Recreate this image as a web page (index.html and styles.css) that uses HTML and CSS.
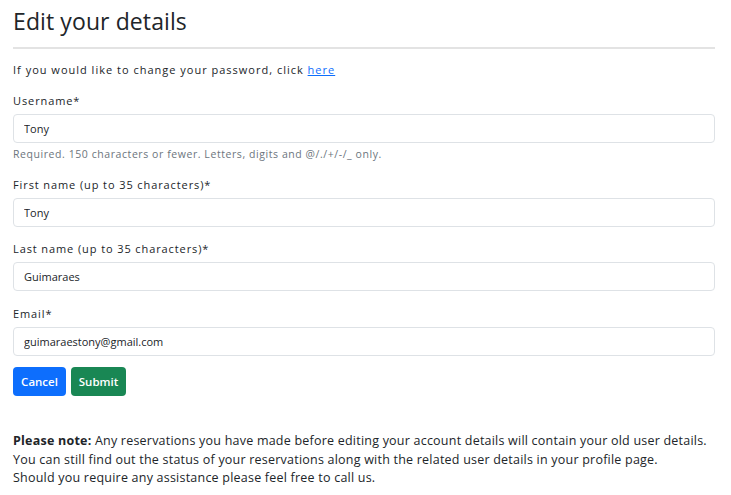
FILE: index.html
```html
<!DOCTYPE html>
<html lang="en">
<head>
<meta charset="utf-8">
<title>Edit your details</title>
<link rel="stylesheet" href="styles.css">
</head>
<body>
<main class="page">
  <h1 class="title">Edit your details</h1>
  <hr class="rule">
  <p class="intro">If you would like to change your password, click <a href="#" class="link">here</a></p>
  <form class="form">
    <div class="field">
      <label class="label" for="username">Username*</label>
      <input class="input" id="username" type="text" value="Tony">
      <div class="help">Required. 150 characters or fewer. Letters, digits and @/./+/-/_ only.</div>
    </div>
    <div class="field">
      <label class="label" for="first">First name (up to 35 characters)*</label>
      <input class="input" id="first" type="text" value="Tony">
    </div>
    <div class="field">
      <label class="label" for="last">Last name (up to 35 characters)*</label>
      <input class="input" id="last" type="text" value="Guimaraes">
    </div>
    <div class="field">
      <label class="label" for="email">Email*</label>
      <input class="input" id="email" type="email" value="guimaraestony@gmail.com">
    </div>
    <div class="actions">
      <a href="#" class="btn btn-blue">Cancel</a>
      <button type="button" class="btn btn-green">Submit</button>
    </div>
  </form>
  <p class="note"><strong>Please note:</strong> Any reservations you have made before editing your account details will contain your old user details.<br>You can still find out the status of your reservations along with the related user details in your profile page.<br>Should you require any assistance please feel free to call us.</p>
</main>
</body>
</html>
```

FILE: styles.css
```css
* { box-sizing: border-box; }
body {
  margin: 0;
  background: #fff;
  color: #212529;
  font-family: "Open Sans", "Noto Sans", sans-serif;
}
.page {
  width: 731px;
  padding: 6px 16px 0 13px;
}
.title {
  margin: 0;
  font-size: 23px;
  font-weight: 400;
  line-height: 30px;
  letter-spacing: 0.1px;
  color: #212529;
}
.rule {
  margin: 11px 0 0;
  border: 0;
  border-top: 2px solid #e3e3e3;
}
.intro {
  margin: 12px 0 0;
  font-size: 11px;
  line-height: 18px;
  letter-spacing: 1px;
}
.link { color: #0d6efd; }
.form { margin-top: 13px; }
.field { display: flex; flex-direction: column; margin-bottom: 13.6px; }
.label {
  font-size: 11px;
  line-height: 17px;
  letter-spacing: 0.9px;
  margin-bottom: 5px;
}
.input {
  height: 29px;
  width: 100%;
  border: 1px solid #dee2e6;
  border-radius: 4px;
  padding: 0 10px;
  font-family: "Open Sans", "Noto Sans", sans-serif;
  font-size: 11px;
  color: #212529;
  background: #fff;
}
.help {
  margin-top: 3px;
  font-size: 10.5px;
  line-height: 16px;
  letter-spacing: 0.57px;
  color: #6c757d;
}
.actions { display: flex; gap: 5px; margin-top: -2px; }
.btn {
  display: inline-flex;
  align-items: center;
  justify-content: center;
  height: 29px;
  padding: 0 10px;
  border: 0;
  border-radius: 4px;
  color: #fff;
  font-family: "Open Sans", "Noto Sans", sans-serif;
  font-size: 11.5px;
  font-weight: 600;
  text-decoration: none;
}
.btn-blue { background: #0d6efd; width: 53px; }
.btn-green { background: #198754; width: 55px; }
.note {
  margin: 36px 0 0;
  font-size: 12.5px;
  line-height: 18.5px;
  letter-spacing: 0.22px;
  white-space: nowrap;
}
.note strong { font-weight: 700; }
```
